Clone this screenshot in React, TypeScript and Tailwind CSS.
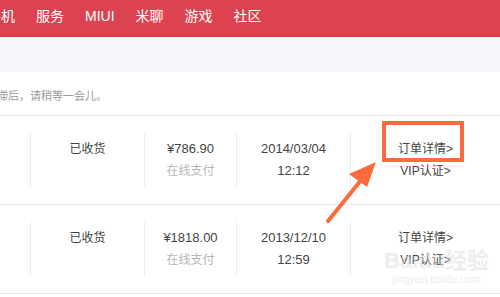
import React from "react";

type Order = {
	status: string;
	price: string;
	date: string;
	time: string;
};

const navItems = ["手机", "服务", "MIUI", "米聊", "游戏", "社区"];

const orders: Order[] = [
	{ status: "已收货", price: "¥786.90", date: "2014/03/04", time: "12:12" },
	{ status: "已收货", price: "¥1818.00", date: "2013/12/10", time: "12:59" },
];

const OrderRow = ({ order }: { order: Order }) => {
	return (
		<div className="flex h-[89px] items-center border-b border-[#e9eaf0]">
			<div className="h-[54px] w-[31px] border-r border-[#ececec]" />
			<div className="flex h-[54px] w-[114px] flex-col items-center border-r border-[#ececec] pt-[5px]">
				<p className="text-[12px] leading-[22px] text-[#444]">{order.status}</p>
			</div>
			<div className="flex h-[54px] w-[92px] flex-col items-center border-r border-[#ececec] pt-[5px]">
				<p className="text-[13px] leading-[22px] text-[#444]">{order.price}</p>
				<p className="text-[12px] leading-[22px] text-[#b5b5b5]">在线支付</p>
			</div>
			<div className="flex h-[54px] w-[114px] flex-col items-center border-r border-[#ececec] pt-[5px]">
				<p className="text-[13px] leading-[22px] text-[#444]">{order.date}</p>
				<p className="text-[13px] leading-[22px] text-[#444]">{order.time}</p>
			</div>
			<div className="flex h-[54px] flex-1 flex-col items-center pt-[5px]">
				<p className="text-[12px] leading-[22px] text-[#444]">订单详情&gt;</p>
				<p className="text-[12px] leading-[22px] text-[#444]">VIP认证&gt;</p>
			</div>
		</div>
	);
};

export default function App() {
	return (
		<div
			className="relative h-[297px] w-[500px] overflow-hidden bg-white"
			style={{ fontFamily: '"Liberation Sans", "Noto Sans CJK SC", sans-serif' }}
		>
			<header className="flex h-[37px] items-center gap-[21px] border-b-2 border-[#e0384a] bg-[#dd4251] pb-[2px]">
				{navItems.map((item, i) => (
					<span
						key={item}
						className={`text-[14px] text-white ${i === 0 ? "-ml-[13px]" : ""}`}
					>
						{item}
					</span>
				))}
			</header>
			<div className="h-[35px] bg-[#f5f6fa]" />
			<div className="flex h-[44px] items-center border-b border-[#e9eaf0]">
				<p className="-ml-[3px] pt-[6px] text-[11px] text-[#9a9a9a]">滞后，请稍等一会儿。</p>
			</div>
			{orders.map((order) => (
				<OrderRow key={order.date} order={order} />
			))}

			{/* watermark */}
			<div className="pointer-events-none absolute left-[384px] top-[249px] flex flex-col items-center text-[#dcdcdc] opacity-50">
				<span className="text-[22px] font-bold leading-[24px]">Baidu经验</span>
				<span className="text-[11px] leading-[13px]">jingyan.baidu.com</span>
			</div>

			{/* annotation */}
			<div className="absolute left-[382px] top-[121px] h-[41px] w-[82px] border-4 border-[#ff6a3c]" />
			<svg className="absolute left-0 top-0" width="500" height="297" viewBox="0 0 500 297">
				<line x1="328" y1="221" x2="366" y2="174" stroke="#ff6a3c" strokeWidth="4" strokeLinecap="round" />
				<polygon points="376,162 349,174 367,187" fill="#ff6a3c" />
			</svg>
		</div>
	);
}
